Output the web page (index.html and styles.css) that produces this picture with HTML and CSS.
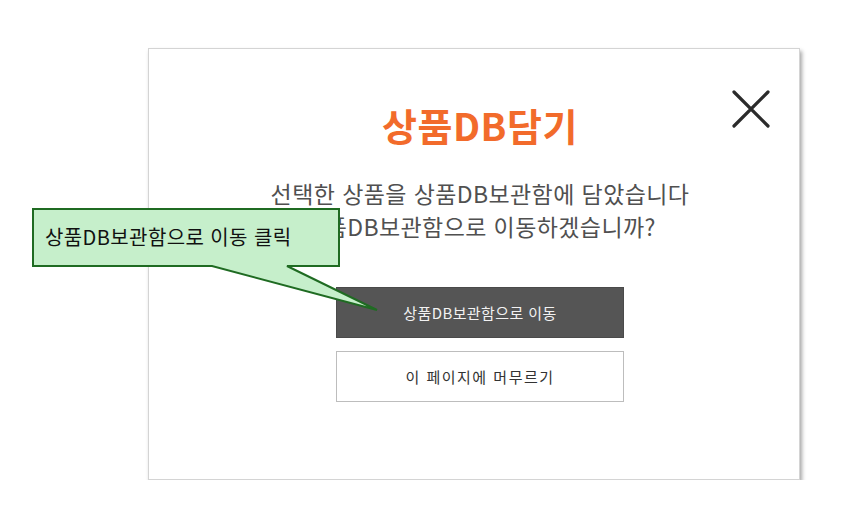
FILE: index.html
```html
<!DOCTYPE html>
<html lang="ko">
<head>
    <meta charset="UTF-8">
    <meta name="viewport" content="width=device-width, initial-scale=1.0">
    <title>상품DB담기</title>
    <link rel="stylesheet" href="styles.css">
</head>
<body>
    <div class="modal">
        <button type="button" class="close" aria-label="닫기">
            <svg width="38" height="38" viewBox="0 0 38 38">
                <path d="M2 2 L36 36 M36 2 L2 36" stroke="#2b2b2b" stroke-width="3.2" stroke-linecap="round" fill="none"/>
            </svg>
        </button>
        <h1 class="title">상품DB담기</h1>
        <p class="message">선택한 상품을 상품DB보관함에 담았습니다<br>상품DB보관함으로 이동하겠습니까?</p>
        <div class="actions">
            <button type="button" class="btn btn-dark">상품DB보관함으로 이동</button>
            <button type="button" class="btn btn-light">이 페이지에 머무르기</button>
        </div>
    </div>

    <div class="callout">
        <svg class="callout-shape" width="400" height="320" viewBox="0 0 400 320">
            <path d="M33 209 L339 209 L339 266 L287 266 L377 310 L212 266 L33 266 Z" fill="#c6efcb" stroke="#1f6b22" stroke-width="2" stroke-linejoin="miter"/>
        </svg>
        <span class="callout-text">상품DB보관함으로 이동 클릭</span>
    </div>
</body>
</html>
```

FILE: styles.css
```css
body {
    margin: 0;
    background: #fff;
    font-family: "Noto Sans CJK KR", "Noto Sans", sans-serif;
}

.modal {
    position: relative;
    box-sizing: border-box;
    width: 652px;
    height: 432px;
    margin: 48px 0 0 148px;
    padding: 51px 0 0 12px;
    border: 1px solid #d4d4d4;
    background: #fff;
    box-shadow: 2px 3px 4px rgba(0, 0, 0, 0.35);
    display: flex;
    flex-direction: column;
    align-items: center;
}

.close {
    position: absolute;
    top: 41px;
    right: 29px;
    padding: 0;
    border: none;
    background: none;
    cursor: pointer;
    line-height: 0;
}

.title {
    margin: 0;
    font-size: 38px;
    line-height: 50px;
    font-weight: bold;
    color: #f26b2b;
    letter-spacing: 0.5px;
}

.message {
    margin: 27px 0 0;
    font-size: 23px;
    line-height: 33px;
    color: #505050;
    text-align: center;
    letter-spacing: 0.4px;
}

.actions {
    margin-top: 44px;
    display: flex;
    flex-direction: column;
    gap: 13px;
}

.btn {
    box-sizing: border-box;
    width: 288px;
    height: 51px;
    font-family: inherit;
    font-size: 15px;
    cursor: pointer;
}

.btn-dark {
    background: #555;
    color: #f2f2f2;
    border: 1px solid #4a4a4a;
    letter-spacing: 0.4px;
}

.btn-light {
    background: #fff;
    color: #333;
    border: 1px solid #bdbdbd;
    letter-spacing: 1.5px;
}

.callout {
    position: absolute;
    left: 0;
    top: 0;
    width: 400px;
    height: 320px;
    pointer-events: none;
}

.callout-shape {
    display: block;
}

.callout-text {
    position: absolute;
    left: 45px;
    top: 223px;
    font-size: 20px;
    line-height: 28px;
    color: #111;
    white-space: nowrap;
    letter-spacing: 0.4px;
}
```
